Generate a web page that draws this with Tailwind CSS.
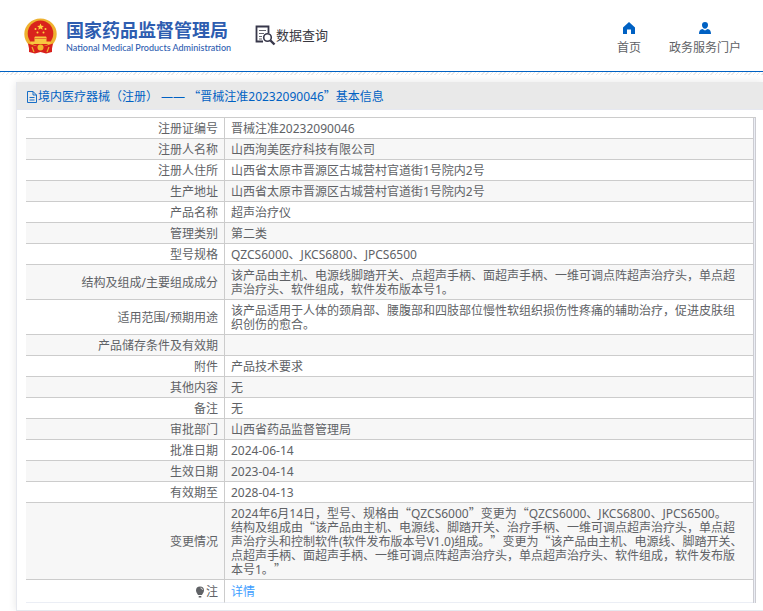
<!DOCTYPE html>
<html lang="zh-CN">
<head>
  <meta charset="UTF-8" />
  <meta name="viewport" content="width=device-width, initial-scale=1.0" />
  <title>国家药品监督管理局 - 数据查询</title>
  <script src="https://cdn.jsdelivr.net/npm/@tailwindcss/browser@4"></script>
</head>
<body class="bg-white overflow-x-hidden font-['Noto_Sans','Noto_Sans_CJK_SC',sans-serif] text-xs text-[#606266] [text-spacing-trim:space-all]">

  <!-- Header -->
  <header class="flex items-center justify-between h-[72px] pl-6 pr-[22px] border-b border-[#0061c3]">
    <div class="flex items-center">
      <a href="#" class="flex items-center gap-[9px] text-[#2e5db0]">
        <svg class="w-[33px] h-9" viewBox="0 0 33 36" aria-hidden="true">
          <path d="M5 25 L5 34 L11 35.500 L16.500 34 L22 35.500 L28 34 L28 25Z" fill="#d8201c" />
          <ellipse cx="16.500" cy="16" rx="16.200" ry="15.600" fill="#eeb12f" />
          <ellipse cx="16.500" cy="15.500" rx="12.800" ry="13" fill="#d9231c" />
          <path d="M16.500 5.500l1 2.200 2.400.2-1.800 1.600.6 2.300-2.200-1.200-2.200 1.200.6-2.300-1.800-1.600 2.400-.2z" fill="#ffd23c" />
          <circle cx="11.500" cy="11" r="1" fill="#ffd23c" />
          <circle cx="21.500" cy="11" r="1" fill="#ffd23c" />
          <circle cx="13.500" cy="14.500" r="1" fill="#ffd23c" />
          <circle cx="19.500" cy="14.500" r="1" fill="#ffd23c" />
          <path d="M11 18.500h11l1 2H10zM10.500 21h12v2.500h4v2.500H6.500v-2.500h4z" fill="#f8c840" />
          <path d="M4 25.500 Q16.500 31 29 25.500 L28 30.500 Q16.500 34 5 30.500Z" fill="#d8201c" />
          <circle cx="16.500" cy="29.500" r="3" fill="#f2b92e" />
          <path d="M8 29l2 5M25 29l-2 5" stroke="#eeb12f" stroke-width="1.200" />
        </svg>
        <span class="flex flex-col">
          <span class="text-lg leading-6 font-bold">国家药品监督管理局</span>
          <span class="text-[9px] leading-3 font-medium font-['Lato','Liberation_Sans',sans-serif] whitespace-nowrap">National Medical Products Administration</span>
        </span>
      </a>
      <a href="#" class="flex items-center ml-6 text-[13px] text-[#37373f]">
        <svg class="w-[21px] h-[21px]" viewBox="0 0 21 21" fill="none" stroke="#37374a" aria-hidden="true">
          <path d="M8 16.500H1.500V1.500H13.500V8" stroke-width="1.800" />
          <path d="M4 5.500h7M4 8.500h5M4 11.500h3M4 14h3" stroke-width="1.200" stroke="#66666f" />
          <circle cx="12.500" cy="12.500" r="3.800" stroke-width="1.600" />
          <path d="M15.500 15.500l4 4" stroke-width="2.400" />
        </svg>
        <span>数据查询</span>
      </a>
    </div>
    <nav class="flex gap-7 mt-1.5">
      <a href="#" class="flex flex-col items-center gap-1.5">
        <svg class="w-3 h-3" viewBox="0 0 12 12" fill="#0061c3" aria-hidden="true">
          <path d="M6 0L12 5.500V12H8V7.500H4V12H0V5.500Z" />
        </svg>
        <span>首页</span>
      </a>
      <a href="#" class="flex flex-col items-center gap-1.5">
        <svg class="w-3 h-3" viewBox="0 0 12 12" fill="#0061c3" aria-hidden="true">
          <path d="M6 0a3 3 0 0 1 3 3c0 2-1.200 3.700-3 3.700S3 5 3 3a3 3 0 0 1 3-3zM3.500 7L6 8.500 8.500 7C11 7.500 12 9 12 12H0C0 9 1 7.500 3.500 7z" />
        </svg>
        <span>政务服务门户</span>
      </a>
    </nav>
  </header>
  <div class="h-[3px] bg-[repeating-linear-gradient(135deg,#e9e9e9_0px,#e9e9e9_1px,#ffffff_1px,#ffffff_3px)]"></div>

  <!-- Detail card -->
  <main class="ml-4 mt-[7px] border-l border-b border-[#e6e8ee] shadow-[0_0_8px_rgba(0,0,0,0.1)]">
    <h1 class="flex items-center h-7 pt-0.5 pl-[9px] bg-[#e9e9e9] border-b border-[#e6e8f0] text-[#0061c3]">
      <svg class="w-3 h-3" viewBox="0 0 12 12" fill="none" stroke="#0061c3" aria-hidden="true">
        <path d="M1.500 .5H7L10.500 4V11.500H1.500ZM7 .5V4H10.500M3.500 6.500H8.500M3.500 9H8.500" stroke-width="0.900" />
      </svg>
      <span>境内医疗器械（注册） —— <span class="leading-0 font-['Noto_Sans_CJK_SC']">“</span>晋械注准20232090046<span class="leading-0 font-['Noto_Sans_CJK_SC']">”</span>基本信息</span>
    </h1>

    <div class="ml-[9px] mr-[7px] mt-[7px] mb-[7px] pr-px border-t border-r border-t-[#cccccc] border-r-[#ccccd2] bg-[#ebeef5]">
      <table class="w-full table-fixed border-separate border-spacing-0 bg-white leading-[14px] border-r border-[#ccccd2] [&_th]:w-[199px] [&_th]:pt-1 [&_th]:pb-0.5 [&_th]:px-[6px] [&_th]:text-right [&_th]:font-normal [&_th]:border-r [&_th]:border-b [&_th]:border-[#cccccc] [&_td]:pt-1 [&_td]:pb-0.5 [&_td]:pl-[6px] [&_td]:pr-3 [&_td]:border-b [&_td]:border-[#cccccc] [&_tr:nth-child(even)]:bg-[#f7f7f7]">
        <tbody>
          <tr><th scope="row">注册证编号</th><td>晋械注准20232090046</td></tr>
          <tr><th scope="row">注册人名称</th><td>山西洵美医疗科技有限公司</td></tr>
          <tr><th scope="row">注册人住所</th><td>山西省太原市晋源区古城营村官道街1号院内2号</td></tr>
          <tr><th scope="row">生产地址</th><td>山西省太原市晋源区古城营村官道街1号院内2号</td></tr>
          <tr><th scope="row">产品名称</th><td>超声治疗仪</td></tr>
          <tr><th scope="row">管理类别</th><td>第二类</td></tr>
          <tr><th scope="row">型号规格</th><td>QZCS6000、JKCS6800、JPCS6500</td></tr>
          <tr><th scope="row">结构及组成/主要组成成分</th><td>该产品由主机、电源线脚踏开关、点超声手柄、面超声手柄、一维可调点阵超声治疗头，单点超声治疗头、软件组成，软件发布版本号1。</td></tr>
          <tr><th scope="row">适用范围/预期用途</th><td>该产品适用于人体的颈肩部、腰腹部和四肢部位慢性软组织损伤性疼痛的辅助治疗，促进皮肤组织创伤的愈合。</td></tr>
          <tr class="h-[21px]"><th scope="row">产品储存条件及有效期</th><td></td></tr>
          <tr><th scope="row">附件</th><td>产品技术要求</td></tr>
          <tr><th scope="row">其他内容</th><td>无</td></tr>
          <tr><th scope="row">备注</th><td>无</td></tr>
          <tr><th scope="row">审批部门</th><td>山西省药品监督管理局</td></tr>
          <tr><th scope="row">批准日期</th><td>2024-06-14</td></tr>
          <tr><th scope="row">生效日期</th><td>2023-04-14</td></tr>
          <tr><th scope="row">有效期至</th><td>2028-04-13</td></tr>
          <tr>
            <th scope="row">变更情况</th>
            <td class="whitespace-nowrap">
              2024年6月14日，型号、规格由<span class="leading-0 font-['Noto_Sans_CJK_SC']">“</span>QZCS6000<span class="leading-0 font-['Noto_Sans_CJK_SC']">”</span>变更为<span class="leading-0 font-['Noto_Sans_CJK_SC']">“</span>QZCS6000、JKCS6800、JPCS6500。<br />
              结构及组成由<span class="leading-0 font-['Noto_Sans_CJK_SC']">“</span>该产品由主机、电源线、脚踏开关、治疗手柄、一维可调点超声治疗头，单点超<br />
              声治疗头和控制软件(软件发布版本号V1.0)组成。<span class="leading-0 font-['Noto_Sans_CJK_SC']">”</span>变更为<span class="leading-0 font-['Noto_Sans_CJK_SC']">“</span>该产品由主机、电源线、脚踏开关、<br />
              点超声手柄、面超声手柄、一维可调点阵超声治疗头，单点超声治疗头、软件组成，软件发布版<br />
              本号1。<span class="leading-0 font-['Noto_Sans_CJK_SC']">”</span>
            </td>
          </tr>
          <tr class="h-[23px] [&>*]:border-b-[#ebeef5]!">
            <th scope="row">
              <span class="flex items-center justify-end">
                <svg class="w-3 h-3" viewBox="0 0 12 12" aria-hidden="true">
                  <path d="M6 .5a4 4 0 0 1 4 4C10 6.500 8.500 7.500 8 9H4C3.500 7.500 2 6.500 2 4.500a4 4 0 0 1 4-4zM4.700 10h2.600v1.500H4.700z" fill="#606266" />
                  <path d="M6.500 2a2 2 0 0 1 2 2" stroke="#ffffff" stroke-width="0.700" fill="none" />
                </svg>
                注
              </span>
            </th>
            <td><a href="#" class="text-[#409eff]">详情</a></td>
          </tr>
        </tbody>
      </table>
    </div>
  </main>

</body>
</html>
